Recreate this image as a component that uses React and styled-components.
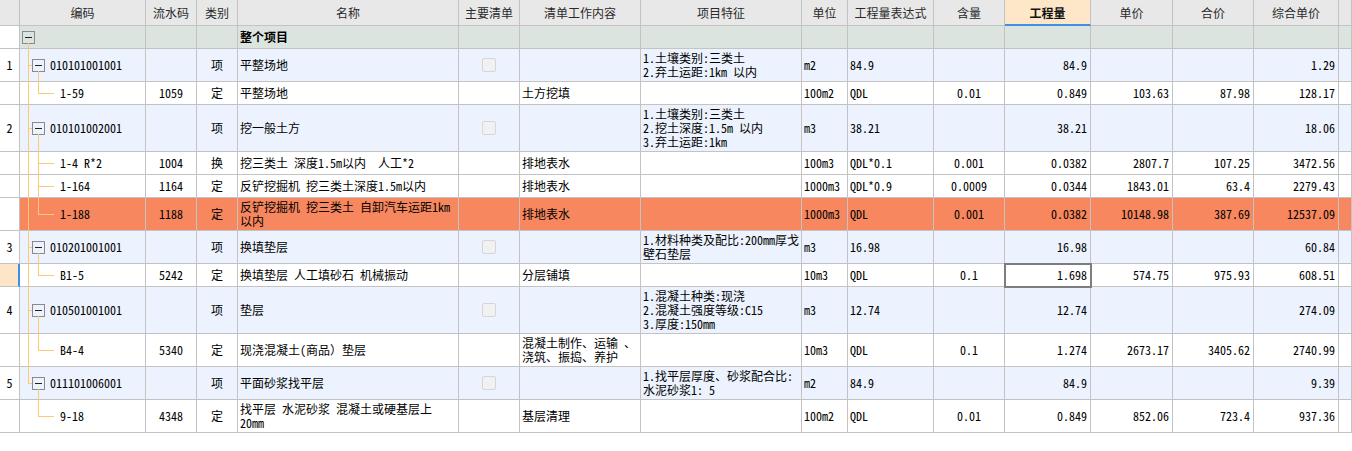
import React from "react"
import styled, { createGlobalStyle, css } from "styled-components"

const GlobalStyle = createGlobalStyle`
  html, body {
    margin: 0;
    padding: 0;
    background: #fff;
  }
  body {
    font-family: "Noto Sans Mono CJK SC", "Noto Sans CJK SC", "Liberation Mono", monospace;
    font-size: 12px;
    color: #000;
  }
`

const COLS =
  "20px 126px 51px 41px 221px 61px 121px 161px 46px 86px 71px 86px 82px 81px 85px 1fr"
const LINE = "#c3c3c3"
const TREE = "#fec974"

const rowBg = {
  root: "#dbe4df",
  item: "#ecf3fe",
  sub: "#ffffff",
  hot: "#f7875e",
}

const Sheet = styled.div`
  width: 1352px;
`

const Row = styled.div`
  display: grid;
  grid-template-columns: ${COLS};
  height: ${(p) => p.$h}px;
  background: ${(p) => rowBg[p.$kind]};
`

const HeadRow = styled.div`
  display: grid;
  grid-template-columns: ${COLS};
  height: 26px;
  background: #e8e8e8;
`

const HeadCell = styled.div`
  box-sizing: border-box;
  display: flex;
  align-items: center;
  justify-content: center;
  border-right: 1px solid ${LINE};
  border-bottom: 1px solid ${LINE};
  color: #2a2a2a;
  white-space: nowrap;
  ${(p) =>
    p.$active &&
    css`
      background: #fee6c9;
      border-bottom: 2px solid #3d8fe8;
      font-weight: bold;
      color: #111;
    `}
`

const Cell = styled.div`
  box-sizing: border-box;
  display: flex;
  align-items: center;
  justify-content: ${(p) =>
    p.$align === "right" ? "flex-end" : p.$align === "center" ? "center" : "flex-start"};
  padding: 0 ${(p) => (p.$align === "right" ? 3 : 2)}px 0 2px;
  border-right: 1px solid ${LINE};
  border-bottom: 1px solid ${LINE};
  line-height: 14px;
  white-space: pre;
  overflow: hidden;
  min-width: 0;
  ${(p) =>
    p.$bold &&
    css`
      font-weight: bold;
    `}
  ${(p) =>
    p.$focus &&
    css`
      outline: 2px solid #7d7d7d;
      outline-offset: -1px;
      position: relative;
      z-index: 2;
    `}
`

const NumCell = styled(Cell)`
  justify-content: center;
  padding: 0;
  background: ${(p) => (p.$current ? "#fde6c8" : "#fff")};
  border-right: ${(p) => (p.$current ? "2px solid #3b8eea" : `1px solid ${LINE}`)};
`

const CodeCell = styled(Cell)`
  position: relative;
  padding-left: ${(p) => p.$indent}px;
  overflow: visible;
`

const Lines = styled.div`
  display: flex;
  flex-direction: column;
`

const VLine = styled.span`
  position: absolute;
  width: 1px;
  left: ${(p) => p.$x}px;
  top: ${(p) => p.$top};
  bottom: ${(p) => p.$bottom};
  background: ${TREE};
`

const HLine = styled.span`
  position: absolute;
  height: 1px;
  left: ${(p) => p.$x}px;
  width: ${(p) => p.$w}px;
  top: 50%;
  background: ${TREE};
`

const Toggle = styled.span`
  position: relative;
  flex: none;
  box-sizing: border-box;
  width: 13px;
  height: 13px;
  margin-right: 5px;
  border: 1px solid #8a8a8a;
  &::after {
    content: "";
    position: absolute;
    left: 2px;
    right: 2px;
    top: 5px;
    height: 1px;
    background: #222;
  }
`

const Check = styled.span`
  box-sizing: border-box;
  width: 14px;
  height: 14px;
  border: 1px solid #d6d6d6;
  border-radius: 2px;
  background: #f1f1f1;
`

const heads = [
  "",
  "编码",
  "流水码",
  "类别",
  "名称",
  "主要清单",
  "清单工作内容",
  "项目特征",
  "单位",
  "工程量表达式",
  "含量",
  "工程量",
  "单价",
  "合价",
  "综合单价",
  "",
]

const rows = [
  { kind: "root", h: 23, name: "整个项目" },
  {
    kind: "item", h: 33, no: "1", code: "010101001001", type: "项", name: "平整场地",
    feature: ["1.土壤类别:三类土", "2.弃土运距:1km 以内"], unit: "m2", expr: "84.9",
    qty: "84.9", total: "1.29",
  },
  {
    kind: "sub", h: 23, last: true, code: "1-59", serial: "1059", type: "定", name: "平整场地",
    work: "土方挖填", unit: "100m2", expr: "QDL", content: "0.01", qty: "0.849",
    price: "103.63", sum: "87.98", total: "128.17",
  },
  {
    kind: "item", h: 47, no: "2", code: "010101002001", type: "项", name: "挖一般土方",
    feature: ["1.土壤类别:三类土", "2.挖土深度:1.5m 以内", "3.弃土运距:1km"], unit: "m3",
    expr: "38.21", qty: "38.21", total: "18.06",
  },
  {
    kind: "sub", h: 23, code: "1-4 R*2", serial: "1004", type: "换",
    name: "挖三类土 深度1.5m以内  人工*2", work: "排地表水", unit: "100m3", expr: "QDL*0.1",
    content: "0.001", qty: "0.0382", price: "2807.7", sum: "107.25", total: "3472.56",
  },
  {
    kind: "sub", h: 23, code: "1-164", serial: "1164", type: "定",
    name: "反铲挖掘机 挖三类土深度1.5m以内", work: "排地表水", unit: "1000m3", expr: "QDL*0.9",
    content: "0.0009", qty: "0.0344", price: "1843.01", sum: "63.4", total: "2279.43",
  },
  {
    kind: "sub", hot: true, h: 33, last: true, code: "1-188", serial: "1188", type: "定",
    name: ["反铲挖掘机 挖三类土 自卸汽车运距1km", "以内"], work: "排地表水", unit: "1000m3",
    expr: "QDL", content: "0.001", qty: "0.0382", price: "10148.98", sum: "387.69",
    total: "12537.09",
  },
  {
    kind: "item", h: 33, no: "3", code: "010201001001", type: "项", name: "换填垫层",
    feature: ["1.材料种类及配比:200mm厚戈", "壁石垫层"], unit: "m3", expr: "16.98",
    qty: "16.98", total: "60.84",
  },
  {
    kind: "sub", h: 23, last: true, current: true, code: "B1-5", serial: "5242", type: "定",
    name: "换填垫层 人工填砂石 机械振动", work: "分层铺填", unit: "10m3", expr: "QDL",
    content: "0.1", qty: "1.698", price: "574.75", sum: "975.93", total: "608.51",
  },
  {
    kind: "item", h: 47, no: "4", code: "010501001001", type: "项", name: "垫层",
    feature: ["1.混凝土种类:现浇", "2.混凝土强度等级:C15", "3.厚度:150mm"], unit: "m3",
    expr: "12.74", qty: "12.74", total: "274.09",
  },
  {
    kind: "sub", h: 33, last: true, code: "B4-4", serial: "5340", type: "定",
    name: "现浇混凝土(商品）垫层", work: ["混凝土制作、运输 、", "浇筑、振捣、养护"],
    unit: "10m3", expr: "QDL", content: "0.1", qty: "1.274", price: "2673.17",
    sum: "3405.62", total: "2740.99",
  },
  {
    kind: "item", h: 33, lastItem: true, no: "5", code: "011101006001", type: "项",
    name: "平面砂浆找平层", feature: ["1.找平层厚度、砂浆配合比:", "水泥砂浆1: 5"], unit: "m2",
    expr: "84.9", qty: "84.9", total: "9.39",
  },
  {
    kind: "sub", h: 33, last: true, noTrunk: true, code: "9-18", serial: "4348", type: "定",
    name: ["找平层 水泥砂浆 混凝土或硬基层上", "20mm"], work: "基层清理", unit: "100m2",
    expr: "QDL", content: "0.01", qty: "0.849", price: "852.06", sum: "723.4",
    total: "937.36",
  },
]

const Text = ({ value }) =>
  Array.isArray(value) ? (
    <Lines>
      {value.map((line, i) => (
        <div key={i}>{line}</div>
      ))}
    </Lines>
  ) : (
    value || null
  )

const Code = ({ row }) => {
  if (row.kind === "root") {
    return (
      <CodeCell $indent={2}>
        <Toggle />
        <VLine $x={8} $top="calc(50% + 6px)" $bottom="-1px" />
      </CodeCell>
    )
  }
  if (row.kind === "item") {
    return (
      <CodeCell $indent={12}>
        <VLine $x={8} $top="-1px" $bottom={row.lastItem ? "50%" : "-1px"} />
        <HLine $x={8} $w={4} />
        <Toggle />
        {row.code}
        <VLine $x={18} $top="calc(50% + 6px)" $bottom="-1px" />
      </CodeCell>
    )
  }
  return (
    <CodeCell $indent={40}>
      {!row.noTrunk && <VLine $x={8} $top="-1px" $bottom="-1px" />}
      <VLine $x={18} $top="-1px" $bottom={row.last ? "50%" : "-1px"} />
      <HLine $x={18} $w={16} />
      {row.code}
    </CodeCell>
  )
}

const DataRow = ({ row }) => (
  <Row $h={row.h} $kind={row.hot ? "hot" : row.kind}>
    <NumCell $current={row.current}>{row.no}</NumCell>
    <Code row={row} />
    <Cell $align="center">{row.serial}</Cell>
    <Cell $align="center">{row.type}</Cell>
    <Cell $bold={row.kind === "root"}>
      <Text value={row.name} />
    </Cell>
    <Cell $align="center">{row.kind === "item" && <Check />}</Cell>
    <Cell>
      <Text value={row.work} />
    </Cell>
    <Cell>
      <Text value={row.feature} />
    </Cell>
    <Cell>{row.unit}</Cell>
    <Cell>{row.expr}</Cell>
    <Cell $align="center">{row.content}</Cell>
    <Cell $align="right" $focus={row.current}>
      {row.qty}
    </Cell>
    <Cell $align="right">{row.price}</Cell>
    <Cell $align="right">{row.sum}</Cell>
    <Cell $align="right">{row.total}</Cell>
    <Cell />
  </Row>
)

export default function App() {
  return (
    <>
      <GlobalStyle />
      <Sheet>
        <HeadRow>
          {heads.map((h, i) => (
            <HeadCell key={i} $active={h === "工程量"}>
              {h}
            </HeadCell>
          ))}
        </HeadRow>
        {rows.map((row, i) => (
          <DataRow key={i} row={row} />
        ))}
      </Sheet>
    </>
  )
}
